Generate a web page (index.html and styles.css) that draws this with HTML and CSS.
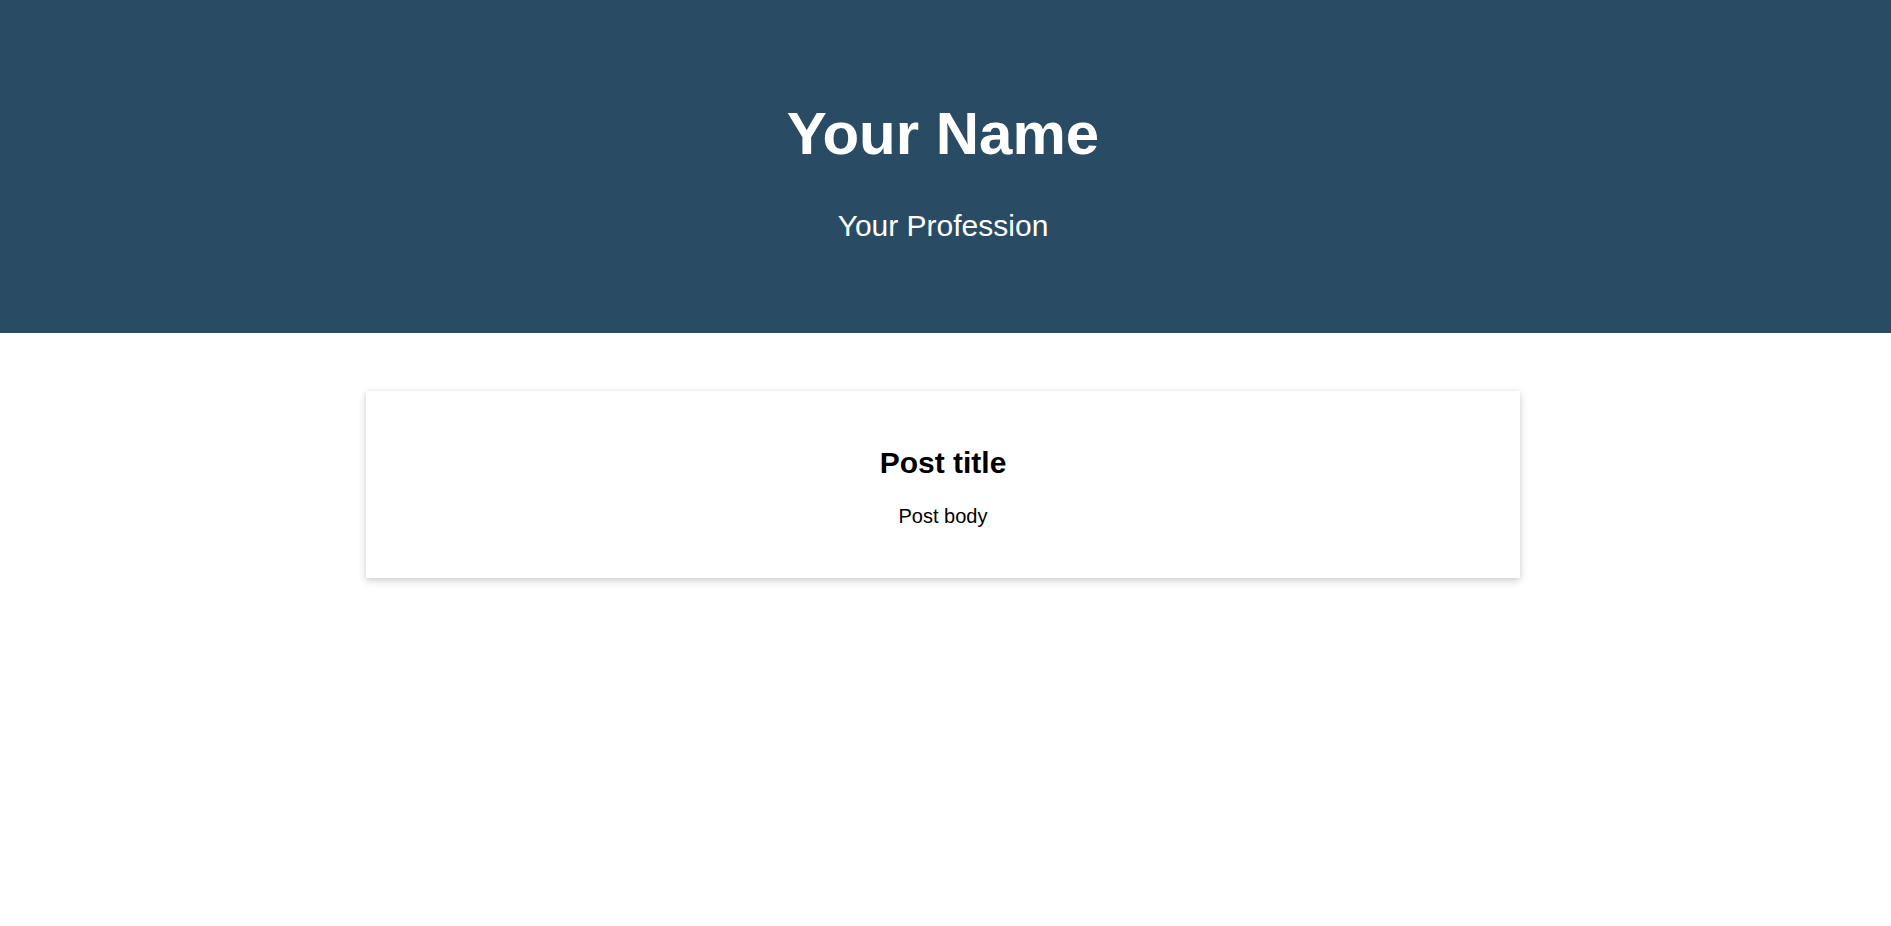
FILE: index.html
```html
<!DOCTYPE html>
<html lang="en">
<head>
<meta charset="utf-8">
<title>Your Name</title>
<link rel="stylesheet" href="styles.css">
</head>
<body>
<header class="hero">
  <h1 class="hero-name">Your Name</h1>
  <p class="hero-profession">Your Profession</p>
</header>
<main class="content">
  <article class="post">
    <h2 class="post-title">Post title</h2>
    <p class="post-body">Post body</p>
  </article>
</main>
</body>
</html>
```

FILE: styles.css
```css
html, body {
  margin: 0;
  padding: 0;
}
html {
  background: #ffffff;
  min-height: 100%;
}
body {
  font-family: "Liberation Sans", Arial, sans-serif;
  background: #ffffff;
  color: #000000;
  min-height: 926px;
}
.hero {
  background: #2a4b64;
  color: #ffffff;
  display: flex;
  flex-direction: column;
  align-items: center;
  padding: 98px 5px 89px 0;
  text-align: center;
}
.hero-name {
  margin: 0;
  font-size: 60px;
  line-height: 72px;
  font-weight: 700;
}
.hero-profession {
  margin: 38px 0 0;
  font-size: 30px;
  line-height: 36px;
  font-weight: 400;
}
.content {
  display: flex;
  justify-content: center;
  padding: 58px 5px 60px 0;
}
.post {
  width: 1154px;
  background: #ffffff;
  box-shadow: 0 3px 8px rgba(0,0,0,0.18), 0 0 4px rgba(0,0,0,0.05);
  text-align: center;
  padding: 54px 0 50px;
}
.post-title {
  margin: 0;
  font-size: 30px;
  line-height: 36px;
  font-weight: 700;
}
.post-body {
  margin: 23px 0 0;
  font-size: 20px;
  line-height: 24px;
}
```
